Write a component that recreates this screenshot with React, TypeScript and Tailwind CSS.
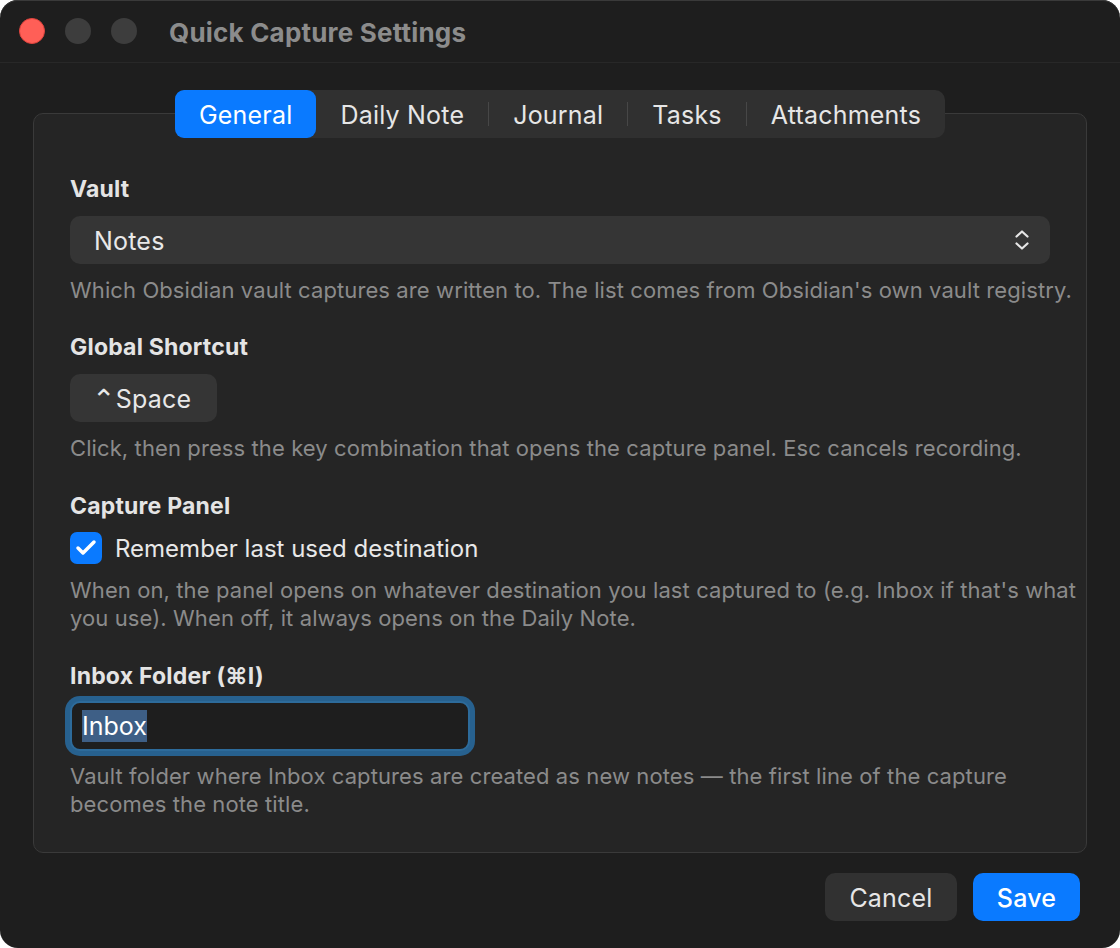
import { Check } from "lucide-react";

const TABS = ["General", "Daily Note", "Journal", "Tasks", "Attachments"];

const labelClass = "text-[23px] leading-[28px] font-bold tracking-[0.2px] text-[#e4e4e4]";
const helpClass = "text-[22px] leading-[28px] tracking-[0.1px] text-[#8b8b8b]";

function TrafficLights() {
  return (
    <div className="flex items-center gap-[20px]">
      <div className="w-[26px] h-[26px] rounded-full bg-[#ff5f57] border border-[#e0443e]" />
      <div className="w-[26px] h-[26px] rounded-full bg-[#3d3d3d]" />
      <div className="w-[26px] h-[26px] rounded-full bg-[#3d3d3d]" />
    </div>
  );
}

function TabBar() {
  return (
    <div className="relative z-10 flex items-center h-[48px] rounded-[10px] bg-[#303030]">
      {TABS.map((tab, i) => (
        <div key={tab} className="flex items-center h-full">
          {i > 1 && <div className="w-px h-[24px] bg-[#474747]" />}
          <div
            className={
              i === 0
                ? "h-full flex items-center pt-[3px] px-[24px] rounded-[9px] bg-[#0a7aff] text-white"
                : "h-full flex items-center pt-[3px] px-[24px] text-[#e6e6e6]"
            }
          >
            {tab}
          </div>
        </div>
      ))}
    </div>
  );
}

function UpDownIcon() {
  return (
    <svg width="16" height="22" viewBox="0 0 16 22" fill="none">
      <path d="M2.5 7.5 L8 2.5 L13.5 7.5" stroke="#e6e6e6" strokeWidth="2.2" strokeLinecap="round" strokeLinejoin="round" />
      <path d="M2.5 14.5 L8 19.5 L13.5 14.5" stroke="#e6e6e6" strokeWidth="2.2" strokeLinecap="round" strokeLinejoin="round" />
    </svg>
  );
}

export default function App() {
  return (
    <div className="w-[1120px] h-[948px] bg-white font-['Inter','Liberation_Sans',sans-serif]">
      <div className="w-full h-full rounded-[18px] bg-[#1e1e1e] shadow-[inset_0_1px_0_#3a3a3a] flex flex-col overflow-hidden">
        {/* Title bar */}
        <div className="h-[63px] shrink-0 flex items-center pl-[19px] border-b border-[#282828]">
          <TrafficLights />
          <div className="ml-[32px] mt-[2px] text-[26px] font-bold text-[#8c8c8c] tracking-[0.2px]">
            Quick Capture Settings
          </div>
        </div>

        <div className="flex flex-col px-[33px] pt-[27px]">
          <div className="flex justify-center text-[25px] tracking-[0.2px]">
            <TabBar />
          </div>

          {/* Group box */}
          <div className="-mt-[25px] rounded-[10px] border border-[#3a3a3a] bg-[#252525] pl-[36px] pr-[8px] pt-[61px] pb-[34px] flex flex-col">
            <div className={labelClass}>Vault</div>
            <div className="mt-[13px] w-[980px] h-[48px] rounded-[10px] bg-[#353535] flex items-center justify-between pl-[24px] pr-[20px] text-[25px] tracking-[0.2px] text-[#e8e8e8]">
              <span className="pt-[3px]">Notes</span>
              <UpDownIcon />
            </div>
            <p className={`mt-[12px] ${helpClass}`}>
              Which Obsidian vault captures are written to. The list comes from Obsidian's own vault registry.
            </p>

            <div className={`mt-[29px] ${labelClass}`}>Global Shortcut</div>
            <div className="mt-[13px] w-[147px] h-[48px] rounded-[10px] bg-[#353535] flex items-center pl-[22px] text-[25px] tracking-[0.2px] text-[#e8e8e8]">
              <span className="font-['DejaVu_Sans',sans-serif] text-[28px] leading-[30px] mt-[4px]">⌃</span>
              <span className="pt-[3px]">Space</span>
            </div>
            <p className={`mt-[12px] ${helpClass}`}>
              Click, then press the key combination that opens the capture panel. Esc cancels recording.
            </p>

            <div className={`mt-[30px] ${labelClass}`}>Capture Panel</div>
            <div className="mt-[12px] flex items-center gap-[13px]">
              <div className="w-[32px] h-[32px] rounded-[7px] bg-[#0a7aff] flex items-center justify-center">
                <Check size={24} strokeWidth={3.5} color="white" />
              </div>
              <span className="text-[24px] leading-[30px] pt-[2px] text-[#e8e8e8]">Remember last used destination</span>
            </div>
            <p className={`mt-[12px] ${helpClass}`}>
              When on, the panel opens on whatever destination you last captured to (e.g. Inbox if that's what you use). When off, it always opens on the Daily Note.
            </p>

            <div className={`mt-[30px] ${labelClass}`}>Inbox Folder (⌘I)</div>
            <div className="mt-[11px] w-[400px] h-[50px] rounded-[10px] border-2 border-[#2d6b9b] ring-[5px] ring-[#27618f] bg-[#1e1e1e] flex items-center pl-[10px] text-[25px] text-white">
              <span className="bg-[#3e5f86] leading-[31px] pt-[1px]">Inbox</span>
            </div>
            <p className={`mt-[11px] ${helpClass}`}>
              Vault folder where Inbox captures are created as new notes — the first line of the capture becomes the note title.
            </p>
          </div>

          {/* Buttons */}
          <div className="mt-[20px] flex justify-end gap-[16px] pr-[7px] text-[25px] tracking-[0.2px]">
            <button className="w-[132px] h-[48px] pt-[3px] rounded-[10px] bg-[#313131] text-[#e6e6e6]">Cancel</button>
            <button className="w-[107px] h-[48px] pt-[3px] rounded-[10px] bg-[#0a7aff] text-white font-medium">Save</button>
          </div>
        </div>
      </div>
    </div>
  );
}
